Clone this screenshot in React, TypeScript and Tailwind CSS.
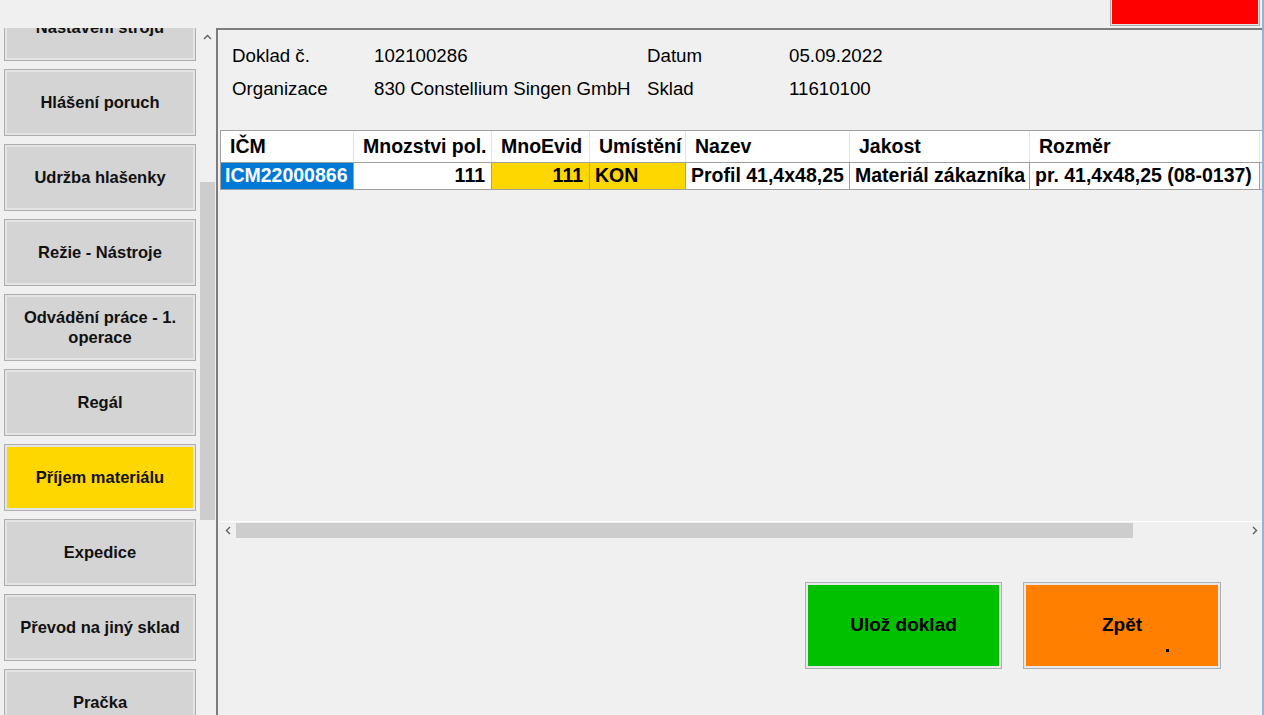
import React from "react";

const SIDE = [
  "Nastavení stroju",
  "Hlášení poruch",
  "Udržba hlašenky",
  "Režie - Nástroje",
  "Odvádění práce - 1. operace",
  "Regál",
  "Příjem materiálu",
  "Expedice",
  "Převod na jiný sklad",
  "Pračka",
];

function SideBtn({ label, active }: { label: string; active?: boolean }) {
  return (
    <div className="h-[67px] w-full shrink-0 border border-[#adadad] bg-[#e4e4e4] p-[2px]">
      <div
        className={
          "flex h-full w-full items-center justify-center px-1 pb-[2px] text-center text-[16.5px] font-bold leading-[20px] text-[#111] " +
          (active ? "bg-[#ffd700]" : "bg-[#d4d4d4]")
        }
      >
        {label}
      </div>
    </div>
  );
}

const COLS = [
  { h: "IČM", w: 134 },
  { h: "Mnozstvi pol.", w: 138 },
  { h: "MnoEvid", w: 98 },
  { h: "Umístění", w: 96 },
  { h: "Nazev", w: 164 },
  { h: "Jakost", w: 180 },
  { h: "Rozměr", w: 230 },
];

export default function App() {
  return (
    <div
      className="flex h-[715px] w-[1264px] flex-col overflow-hidden border-r-2 border-[#8fb4de] bg-[#f0f0f0] text-black"
      style={{ fontFamily: '"Liberation Sans", Arial, sans-serif' }}
    >
      {/* top band */}
      <div className="flex h-[28px] shrink-0 items-start justify-end pr-[2px]">
        <div className="h-[26px] w-[150px] border border-t-0 border-[#adadad] bg-[#e4e4e4] px-[1px] pb-[1px]">
          <div className="h-full w-full bg-[#ff0000]" />
        </div>
      </div>

      <div className="flex min-h-0 flex-1">
        {/* sidebar */}
        <div className="flex w-[216px] shrink-0 overflow-hidden">
          <div className="w-[199px] shrink-0 overflow-hidden">
            <div className="mt-[-34px] flex flex-col gap-[8px] pl-[4px] pr-[3px]">
              {SIDE.map((s) => (
                <SideBtn key={s} label={s} active={s === "Příjem materiálu"} />
              ))}
            </div>
          </div>
          <div className="flex w-[17px] shrink-0 flex-col items-center bg-[#f0f0f0]">
            <div className="flex h-[17px] w-full items-center justify-center">
              <svg width="9" height="6" viewBox="0 0 9 6">
                <path d="M1 5 L4.5 1.5 L8 5" fill="none" stroke="#606060" strokeWidth="1.4" />
              </svg>
            </div>
            <div className="h-[137px]" />
            <div className="h-[338px] w-[15px] bg-[#cdcdcd]" />
          </div>
        </div>

        {/* main */}
        <div className="flex min-w-0 flex-1 flex-col border-l-2 border-t-2 border-[#7d7d7d]">
          <div className="pl-[14px] pt-[10px] text-[18.7px]">
            <div className="flex h-[33px] items-center">
              <div className="w-[142px]">Doklad č.</div>
              <div className="w-[273px]">102100286</div>
              <div className="w-[142px]">Datum</div>
              <div>05.09.2022</div>
            </div>
            <div className="flex h-[33px] items-center">
              <div className="w-[142px]">Organizace</div>
              <div className="w-[273px] whitespace-nowrap">830 Constellium Singen GmbH</div>
              <div className="w-[142px]">Sklad</div>
              <div>11610100</div>
            </div>
          </div>

          {/* grid */}
          <div className="ml-[2px] mt-[24px] flex h-[408px] flex-col border-t border-[#a0a0a0]">
            <div className="flex h-[31px] bg-white text-[19.5px] font-bold">
              {COLS.map((c, i) => (
                <div
                  key={c.h}
                  style={{ width: c.w }}
                  className={
                    "flex shrink-0 items-center whitespace-nowrap border-r border-[#e3e3e3] pl-[9px] " +
                    (i === 0 ? "border-l border-l-[#a0a0a0]" : "")
                  }
                >
                  {c.h}
                </div>
              ))}
            </div>
            <div className="flex h-[28px] border-b border-t border-[#a0a0a0] text-[19.5px] font-bold">
              <div style={{ width: 134 }} className="flex shrink-0 items-center border-l border-r border-[#a0a0a0] bg-[#0078d7] pl-[4px] text-white">
                ICM22000866
              </div>
              <div style={{ width: 138 }} className="flex shrink-0 items-center justify-end border-r border-[#a0a0a0] bg-white pr-[6px]">
                111
              </div>
              <div style={{ width: 98 }} className="flex shrink-0 items-center justify-end border-r border-[#a0a0a0] bg-[#ffd700] pr-[6px]">
                111
              </div>
              <div style={{ width: 96 }} className="flex shrink-0 items-center border-r border-[#a0a0a0] bg-[#ffd700] pl-[5px]">
                KON
              </div>
              <div style={{ width: 164 }} className="flex shrink-0 items-center whitespace-nowrap border-r border-[#a0a0a0] bg-white pl-[5px]">
                Profil 41,4x48,25
              </div>
              <div style={{ width: 180 }} className="flex shrink-0 items-center whitespace-nowrap border-r border-[#a0a0a0] bg-white pl-[5px]">
                Materiál zákazníka
              </div>
              <div style={{ width: 230 }} className="flex shrink-0 items-center whitespace-nowrap border-r border-[#a0a0a0] bg-white pl-[5px]">
                pr. 41,4x48,25 (08-0137)
              </div>
            </div>
            <div className="flex-1" />
            {/* horizontal scrollbar */}
            <div className="flex h-[17px] items-center border-t border-white bg-[#f0f0f0]">
              <div className="flex w-[16px] justify-center">
                <svg width="6" height="9" viewBox="0 0 6 9">
                  <path d="M5 1 L1.5 4.5 L5 8" fill="none" stroke="#606060" strokeWidth="1.4" />
                </svg>
              </div>
              <div className="h-[15px] w-[897px] bg-[#cdcdcd]" />
              <div className="flex-1" />
              <div className="flex w-[15px] justify-center">
                <svg width="6" height="9" viewBox="0 0 6 9">
                  <path d="M1 1 L4.5 4.5 L1 8" fill="none" stroke="#606060" strokeWidth="1.4" />
                </svg>
              </div>
            </div>
          </div>

          {/* bottom buttons */}
          <div className="flex justify-end gap-[21px] pr-[41px] pt-[44px]">
            <div className="h-[87px] w-[197px] border border-[#a9b0b5] bg-[#e8e8e8] p-[2px]">
              <div className="flex h-full w-full items-center justify-center bg-[#00c000] text-[19px] font-bold">
                Ulož doklad
              </div>
            </div>
            <div className="h-[87px] w-[198px] border border-[#a9b0b5] bg-[#e8e8e8] p-[2px]">
              <div className="relative flex h-full w-full items-center justify-center bg-[#ff8000] text-[19px] font-bold">
                Zpět
                <div className="absolute left-[140px] top-[64px] h-[3px] w-[3px] bg-black" />
              </div>
            </div>
          </div>
        </div>
      </div>
    </div>
  );
}
